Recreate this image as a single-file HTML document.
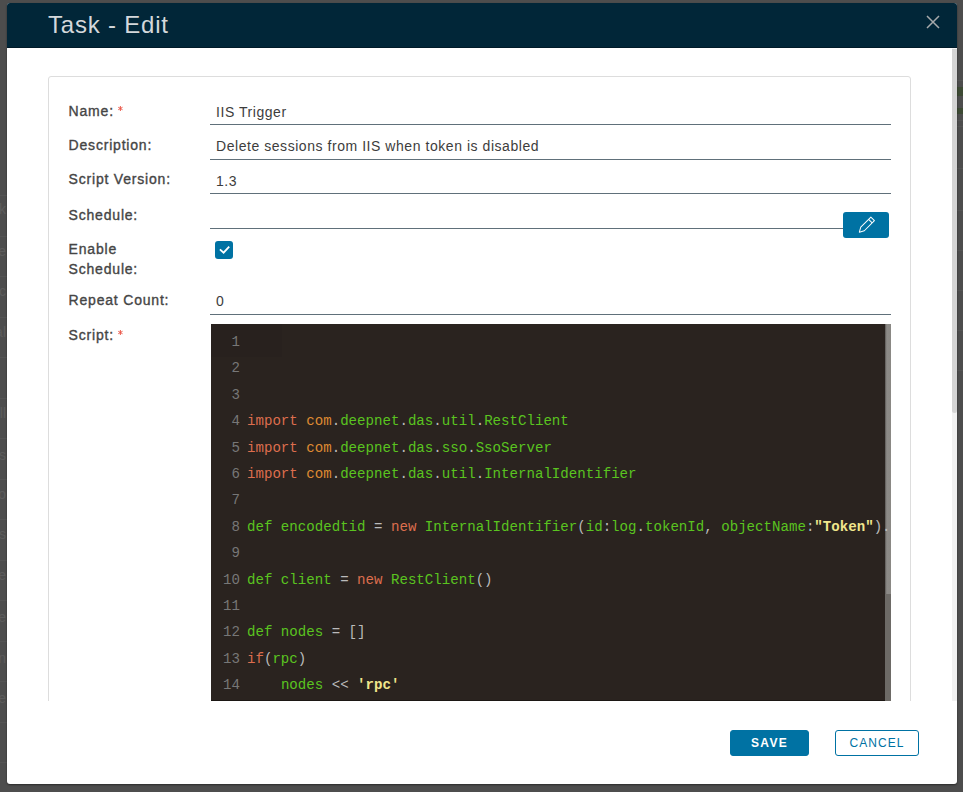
<!DOCTYPE html>
<html><head><meta charset="utf-8">
<style>
*{box-sizing:border-box;margin:0;padding:0}
html,body{width:963px;height:792px;overflow:hidden}
body{background:#4d4d4d;font-family:"Liberation Sans",sans-serif;position:relative}
#modal{position:absolute;left:7px;top:3px;width:950px;height:781px;background:#fff;border-radius:3px;box-shadow:0 1px 2px rgba(0,0,0,.45)}
#hdr{position:absolute;left:7px;top:3px;width:950px;height:45px;background:#012638;border-bottom:1px solid #001a28;border-radius:3px 3px 0 0}
#title{position:absolute;left:48px;top:7px;font-size:24px;line-height:36px;color:#d4d8db;letter-spacing:0.8px;white-space:pre}
#close{position:absolute;left:925px;top:14px}
#sbtrack{position:absolute;left:952px;top:48px;width:5px;height:653px;background:#f1f1f1}
#sbthumb{position:absolute;left:952px;top:49px;width:5px;height:364px;background:#d4d4d4;border-radius:0 0 3px 3px}
#clip{position:absolute;left:0;top:0;width:963px;height:701px;overflow:hidden}
#card{position:absolute;left:48px;top:76px;width:863px;height:700px;border:1px solid #ddd;border-radius:3px}
.lbl{position:absolute;left:68.6px;font-size:14px;font-weight:400;color:#454545;-webkit-text-stroke:.35px #454545;letter-spacing:.8px;line-height:20px;white-space:pre}
.ast{position:absolute;left:117px}
.val{position:absolute;left:216px;font-size:14px;color:#3d3d3d;line-height:20px;white-space:pre;letter-spacing:0.55px}
.ul{position:absolute;left:210px;width:681px;height:1px;background:#60707a}
#pbtn{position:absolute;left:843px;top:212px;width:46px;height:26px;background:#0072a3;border-radius:3px}
#pbtn svg{position:absolute;left:14.6px;top:5px;overflow:visible}
#cb{position:absolute;left:215px;top:241px;width:18px;height:18px;background:#0072a3;border-radius:3px}
#cb svg{position:absolute;left:0;top:0}
#editor{position:absolute;left:211px;top:324px;width:680px;height:400px;background:#2a231f;overflow:hidden}
#ecl{position:absolute;left:0;top:0;width:677px;height:400px;overflow:hidden}
#ebot{position:absolute;left:211px;top:700px;width:674px;height:1px;background:#1c1714}
#esb{position:absolute;left:674px;top:0;width:6px;height:400px;background:#6d6a66}
#esbt{position:absolute;left:674px;top:0;width:6px;height:270px;background:linear-gradient(90deg,#5a5754 0,#8d8b88 30%,#8a8884 100%)}
pre{font-family:"Liberation Mono",monospace;font-size:14.12px;line-height:26.385px;white-space:pre;position:absolute;top:5.1px}
#gut{left:0;width:29px;text-align:right;color:#777}
#code{left:36px;color:#bbb}
.k{color:#dd6e4e}.o{color:#de8a32}.g{color:#5ac41f}.s{color:#f0e68c;font-weight:700}.p{color:#bbb}
.btn{position:absolute;top:730px;height:26px;border-radius:3px;font-size:12px;line-height:24px;text-align:center;white-space:pre}
#save{left:730px;width:79px;background:#0072a3;color:#fff;font-weight:700;letter-spacing:1.3px;border:1px solid #0072a3}
#cancel{left:835px;width:84px;background:#fff;color:#0072a3;letter-spacing:1.05px;border:1px solid #0072a3}
</style></head>
<body>
<div style="position:absolute;left:0;top:195px;width:7px;height:1px;background:#545454"></div>
<div style="position:absolute;left:0;top:236px;width:7px;height:1px;background:#545454"></div>
<div style="position:absolute;left:0;top:276px;width:7px;height:1px;background:#545454"></div>
<div style="position:absolute;left:0;top:317px;width:7px;height:1px;background:#545454"></div>
<div style="position:absolute;left:0;top:357px;width:7px;height:1px;background:#545454"></div>
<div style="position:absolute;left:0;top:398px;width:7px;height:1px;background:#545454"></div>
<div style="position:absolute;left:0;top:438px;width:7px;height:1px;background:#545454"></div>
<div style="position:absolute;left:0;top:479px;width:7px;height:1px;background:#545454"></div>
<div style="position:absolute;left:0;top:519px;width:7px;height:1px;background:#545454"></div>
<div style="position:absolute;left:0;top:560px;width:7px;height:1px;background:#545454"></div>
<div style="position:absolute;left:0;top:600px;width:7px;height:1px;background:#545454"></div>
<div style="position:absolute;left:0;top:641px;width:7px;height:1px;background:#545454"></div>
<div style="position:absolute;left:0;top:681px;width:7px;height:1px;background:#545454"></div>
<div style="position:absolute;left:0;top:722px;width:7px;height:1px;background:#545454"></div>
<div style="position:absolute;left:0;top:762px;width:7px;height:1px;background:#545454"></div>
<div style="position:absolute;right:957px;top:201px;font-size:14px;line-height:16px;color:#5c5c5c;white-space:pre">k</div>
<div style="position:absolute;right:957px;top:243px;font-size:14px;line-height:16px;color:#5c5c5c;white-space:pre">e</div>
<div style="position:absolute;right:957px;top:283px;font-size:14px;line-height:16px;color:#5c5c5c;white-space:pre">c</div>
<div style="position:absolute;right:957px;top:324px;font-size:14px;line-height:16px;color:#5c5c5c;white-space:pre">al</div>
<div style="position:absolute;right:957px;top:405px;font-size:14px;line-height:16px;color:#5c5c5c;white-space:pre">ll</div>
<div style="position:absolute;right:957px;top:447px;font-size:14px;line-height:16px;color:#5c5c5c;white-space:pre">us</div>
<div style="position:absolute;right:957px;top:486px;font-size:14px;line-height:16px;color:#5c5c5c;white-space:pre">o</div>
<div style="position:absolute;right:957px;top:526px;font-size:14px;line-height:16px;color:#5c5c5c;white-space:pre">s</div>
<div style="position:absolute;right:957px;top:567px;font-size:14px;line-height:16px;color:#5c5c5c;white-space:pre">e</div>
<div style="position:absolute;right:957px;top:609px;font-size:14px;line-height:16px;color:#5c5c5c;white-space:pre">e</div>
<div style="position:absolute;right:957px;top:650px;font-size:14px;line-height:16px;color:#5c5c5c;white-space:pre">n</div>
<div style="position:absolute;right:957px;top:690px;font-size:14px;line-height:16px;color:#5c5c5c;white-space:pre">e</div>
<div style="position:absolute;left:957px;top:87px;width:6px;height:9px;background:#3d4a34"></div>
<div style="position:absolute;left:957px;top:108px;width:6px;height:6px;background:#3d4a34"></div>
<div style="position:absolute;left:957px;top:80px;width:6px;height:1px;background:#545454"></div>
<div style="position:absolute;left:957px;top:120px;width:6px;height:1px;background:#545454"></div>
<div style="position:absolute;left:957px;top:126px;width:6px;height:1px;background:#545454"></div>
<div style="position:absolute;left:957px;top:168px;width:6px;height:1px;background:#545454"></div>
<div style="position:absolute;left:957px;top:210px;width:6px;height:1px;background:#545454"></div>
<div style="position:absolute;left:957px;top:250px;width:6px;height:1px;background:#545454"></div>
<div style="position:absolute;left:957px;top:290px;width:6px;height:1px;background:#545454"></div>
<div style="position:absolute;left:957px;top:330px;width:6px;height:1px;background:#545454"></div>
<div style="position:absolute;left:957px;top:370px;width:6px;height:1px;background:#545454"></div>
<div id="modal"></div>
<div id="hdr"></div>
<div id="title">Task - Edit</div>
<svg id="close" width="16" height="16" viewBox="0 0 16 16"><path d="M2 2L14 14M14 2L2 14" stroke="#a6a9ab" stroke-width="1.5" fill="none"/></svg>
<div id="clip">
  <div id="card"></div>
  <div class="lbl" style="top:101px">Name:</div><svg class="ast" style="top:105.0px" width="7" height="7" viewBox="0 0 7 7"><path d="M3.4 1V6M1.25 2.25L5.55 4.75M1.25 4.75L5.55 2.25" stroke="#ea5446" stroke-width="0.95" fill="none"/></svg>
  <div class="val" style="top:102px">IIS Trigger</div>
  <div class="ul" style="top:124px"></div>
  <div class="lbl" style="top:135px">Description:</div>
  <div class="val" style="top:136px">Delete sessions from IIS when token is disabled</div>
  <div class="ul" style="top:159px"></div>
  <div class="lbl" style="top:169px">Script Version:</div>
  <div class="val" style="top:171px">1.3</div>
  <div class="ul" style="top:193px"></div>
  <div class="lbl" style="top:205px">Schedule:</div>
  <div class="ul" style="top:228px;width:633px"></div>
  <div id="pbtn"><svg width="16" height="16" viewBox="0 0 16 16"><g transform="rotate(45 8 8.5)" fill="none" stroke="#fff" stroke-width="1" stroke-linejoin="round"><path d="M5.5 -0.9H10.5V13.4L8 17.9L5.5 13.4Z"/><path d="M5.5 2.3H10.5"/></g></svg></div>
  <div class="lbl" style="top:240px;line-height:19.5px">Enable
Schedule:</div>
  <div id="cb"><svg width="18" height="18" viewBox="0 0 18 18"><path d="M4.9 8.3L8.6 11.7L14.2 5.7" stroke="#fff" stroke-width="1.8" fill="none"/></svg></div>
  <div class="lbl" style="top:290px">Repeat Count:</div>
  <div class="val" style="top:291px">0</div>
  <div class="ul" style="top:314px"></div>
  <div class="lbl" style="top:325px">Script:</div><svg class="ast" style="top:328.9px" width="7" height="7" viewBox="0 0 7 7"><path d="M3.4 1V6M1.25 2.25L5.55 4.75M1.25 4.75L5.55 2.25" stroke="#ea5446" stroke-width="0.95" fill="none"/></svg>
  <div id="editor">
<div style="position:absolute;left:0;top:0;width:71px;height:33px;background:#28211e"></div>
<div id="esb"></div>
    <div id="esbt"></div>
<div id="ecl"><pre id="gut">1
2
3
4
5
6
7
8
9
10
11
12
13
14
15</pre>
<pre id="code">



<span class="k">import</span> <span class="o">com</span>.<span class="g">deepnet</span>.<span class="g">das</span>.<span class="g">util</span>.<span class="g">RestClient</span>
<span class="k">import</span> <span class="o">com</span>.<span class="g">deepnet</span>.<span class="g">das</span>.<span class="g">sso</span>.<span class="g">SsoServer</span>
<span class="k">import</span> <span class="o">com</span>.<span class="g">deepnet</span>.<span class="g">das</span>.<span class="g">util</span>.<span class="g">InternalIdentifier</span>

<span class="g">def encodedtid</span> = <span class="k">new</span> <span class="g">InternalIdentifier</span>(<span class="g">id</span>:<span class="g">log</span>.<span class="g">tokenId</span>, <span class="g">objectName</span>:<span class="s">"Token"</span>).<span class="g">toString</span>()

<span class="g">def client</span> = <span class="k">new</span> <span class="g">RestClient</span>()

<span class="g">def nodes</span> = []
<span class="k">if</span>(<span class="g">rpc</span>)
    <span class="g">nodes</span> &lt;&lt; <span class="s">'rpc'</span>
</pre></div>
  </div>
  <div id="ebot"></div>
</div>
<div id="sbtrack"></div>
<div id="sbthumb"></div>
<div class="btn" id="save">SAVE</div>
<div class="btn" id="cancel">CANCEL</div>
</body></html>
